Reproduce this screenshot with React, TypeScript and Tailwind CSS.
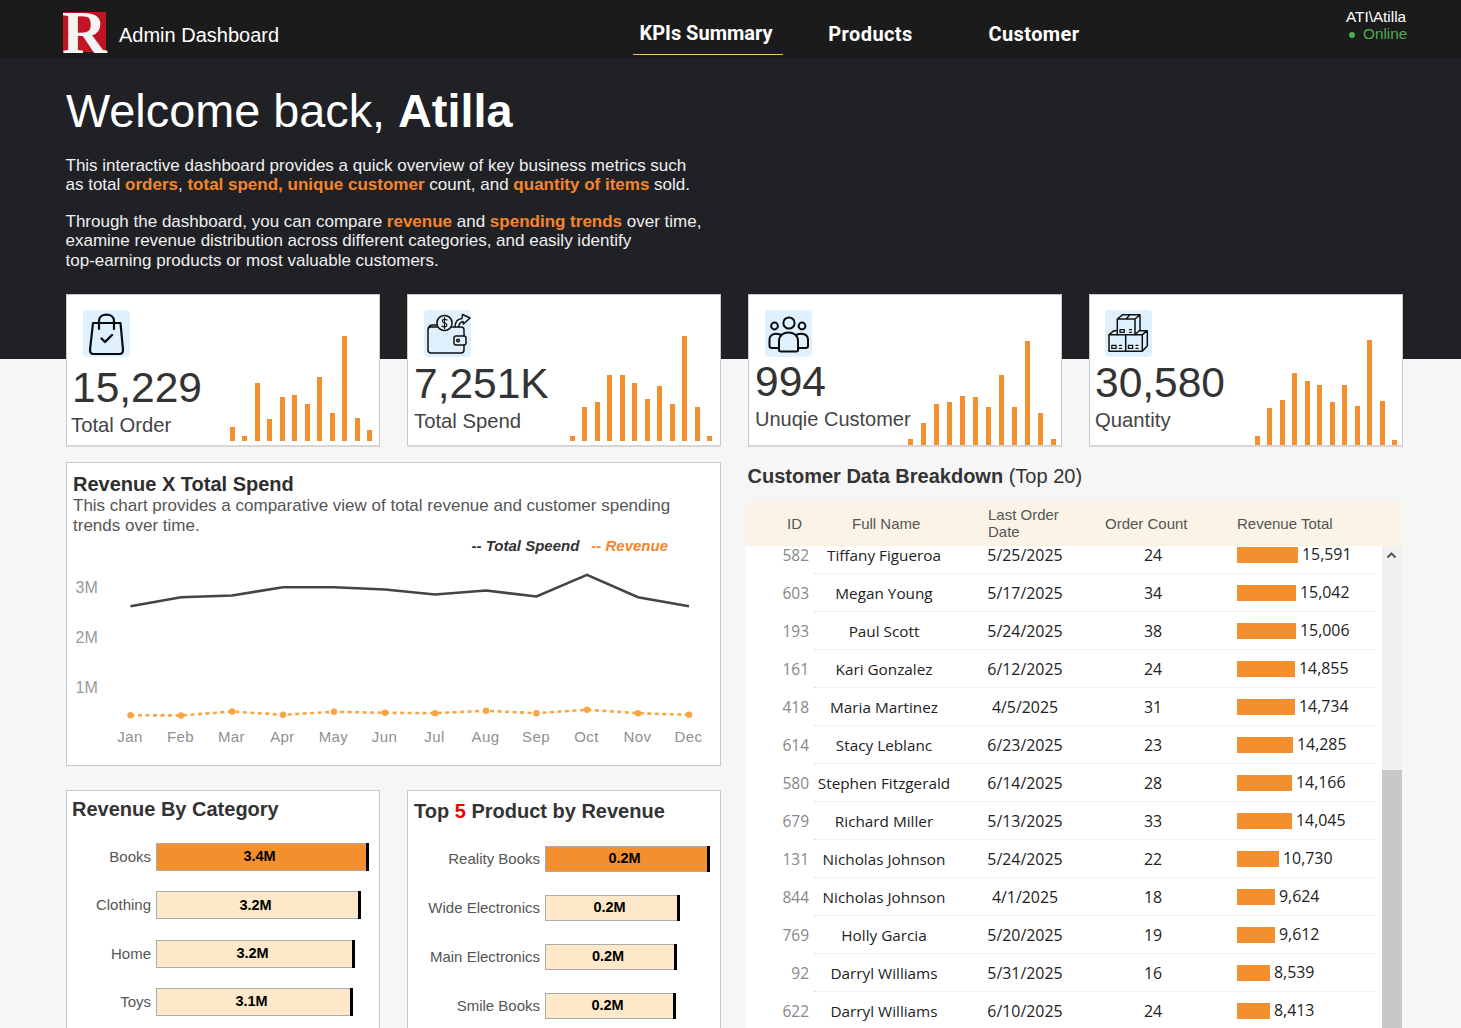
const Orange = ({ children }: { children: React.ReactNode }) => (
  <b className="font-bold text-[#f5852a]">{children}</b>
);

function BagIcon() {
  return (
    <svg viewBox="0 0 47 47" className="h-full w-full" fill="none" stroke="#0c0c0c" strokeWidth="2.2" strokeLinecap="round" strokeLinejoin="round">
      <path d="M10 13H37.5L40 40Q40 44 36.5 44H10.5Q7 44 7 40Z" />
      <path d="M16 19V11C16 2.5 31 2.5 31 11V19" />
      <path d="M18.5 28.5L22 32L29 25" strokeWidth="2.4" />
    </svg>
  );
}
function WalletIcon() {
  return (
    <svg viewBox="0 0 47 47" className="h-full w-full" fill="none" stroke="#111" strokeWidth="1.5" strokeLinecap="round" strokeLinejoin="round">
      <path d="M4 20V40Q4 43 7 43H37Q40 43 40 40V35M40 26V20Q40 17 37 17H7Q4 17 4 20Q4 15 9 15H13" />
      <circle cx="20.5" cy="13" r="7.6" fill="#dff0fe" />
      <path d="M23 10Q20.5 8.5 18.6 10Q18 12.6 20.5 13Q23.4 13.6 22.6 16Q20.5 17.6 18 16M20.5 7.5V18.5" strokeWidth="1.2" />
      <path d="M31 17C31 11 34 9 38 8.5L38.5 4.5L46 8L39.5 14L39 11.5C36 12 35 14 34.5 17" />
      <rect x="30" y="26" width="12" height="9" rx="2" />
      <circle cx="34" cy="30.5" r="1.3" />
    </svg>
  );
}
function PeopleIcon() {
  return (
    <svg viewBox="0 0 47 47" className="h-full w-full" fill="none" stroke="#0c0c0c" strokeWidth="2" strokeLinecap="round" strokeLinejoin="round">
      <circle cx="24" cy="13" r="5.6" />
      <circle cx="9.5" cy="16" r="3.4" />
      <circle cx="37" cy="16" r="3.4" />
      <path d="M14 40V31C14 19.5 33 19.5 33 31V40Q33 41.5 31 41.5H16Q14 41.5 14 40Z" />
      <path d="M14 38H7Q4.5 38 4.5 36V30C4.5 24 10 22.5 16 25" />
      <path d="M33 38H40.5Q43 38 43 36V30C43 24 37 22.5 31 25" />
    </svg>
  );
}
function BoxesIcon() {
  return (
    <svg viewBox="0 0 47 47" className="h-full w-full" fill="none" stroke="#111" strokeWidth="1.5" strokeLinecap="round" strokeLinejoin="round">
      <path d="M12.3 24.7V9H30V24.7M12.3 9L17.7 4.7H35L30 9M35 4.7V20L30 24.7M21 9L25 4.7" />
      <rect x="15" y="19.7" width="4.3" height="2.6" strokeWidth="1.3" />
      <path d="M24.5 19.7H26.5M24.5 22.3H26.5" strokeWidth="1.2" />
      <path d="M4 24.7H37.3V41.3H4ZM20.7 24.7V41.3M4 24.7L9 20.7H12.3M37.3 24.7L42.3 20.7H35M42.3 20.7V35.7L37.3 41.3" />
      <rect x="6.8" y="35.4" width="4.3" height="3" strokeWidth="1.3" />
      <path d="M14.5 35.4H16.5M14.5 38.4H16.5" strokeWidth="1.2" />
      <rect x="23.4" y="35.4" width="4.3" height="3" strokeWidth="1.3" />
      <path d="M31 35.4H33M31 38.4H33" strokeWidth="1.2" />
    </svg>
  );
}

const cards = [
  {
    value: "15,229", label: "Total Order", icon: <BagIcon />, iconCls: "ml-[16px]",
    numCls: "mt-[9px] ml-[5px]", labelCls: "mt-[3px] ml-[4px] text-[20.3px]",
    bars: [14, 5, 58, 22, 44, 46, 37, 64, 28, 105, 23, 11], barCls: "w-[142px] mr-[7px] mb-[4px]",
  },
  {
    value: "7,251K", label: "Total Spend", icon: <WalletIcon />, iconCls: "ml-[16px]",
    numCls: "mt-[5px] ml-[6px]", labelCls: "mt-[3px] ml-[6px] text-[20.3px]",
    bars: [5, 34, 39, 66, 66, 58, 42, 55, 37, 105, 34, 5], barCls: "w-[142px] mr-[8px] mb-[4px]",
  },
  {
    value: "994", label: "Unuqie Customer", icon: <PeopleIcon />, iconCls: "ml-[16px]",
    numCls: "mt-[3px] ml-[6px]", labelCls: "mt-[3px] ml-[6px] text-[20px]",
    bars: [6, 22, 41, 43, 49, 48, 38, 70, 38, 104, 32, 6], barCls: "w-[148px] mr-[5px] mb-0",
  },
  {
    value: "30,580", label: "Quantity", icon: <BoxesIcon />, iconCls: "ml-[15px]",
    numCls: "mt-[4px] ml-[5px]", labelCls: "mt-[3px] ml-[5px] text-[20.3px]",
    bars: [9, 37, 45, 72, 64, 60, 43, 60, 39, 105, 44, 5], barCls: "w-[142px] mr-[5px] mb-0",
  },
];

function KpiCard({ c }: { c: (typeof cards)[number] }) {
  return (
    <div className="flex h-[153px] justify-between overflow-hidden border border-[#c9c9c9] border-b-2 border-b-[#d6d6d6] bg-white">
      <div className="flex min-w-0 flex-col whitespace-nowrap pt-[15px]">
        <div className={`h-[47px] w-[47px] rounded bg-[#dff0fe] ${c.iconCls}`}>{c.icon}</div>
        <div className={`h-[44px] text-[42.5px] leading-[44px] text-[#333] ${c.numCls}`}>{c.value}</div>
        <div className={`h-[24px] leading-[24px] text-[#444] ${c.labelCls}`}>{c.label}</div>
      </div>
      <div className={`flex shrink-0 items-end justify-between self-end ${c.barCls}`}>
        {c.bars.map((h, i) => (
          <div key={i} className="w-[5px] bg-[#f48f2e]" style={{ height: h }} />
        ))}
      </div>
    </div>
  );
}

const xs = [130.5, 181, 232, 283, 334, 385, 435, 486, 536.5, 587, 638, 689];
const spend = [605.7, 596.7, 595, 586.7, 586.7, 589, 594, 590, 596, 574.3, 596.7, 605.7];
const revenue = [714.7, 715, 711, 714.3, 711.3, 712.3, 712.7, 710.3, 712.7, 709.3, 712.7, 714.3];
const months = ["Jan", "Feb", "Mar", "Apr", "May", "Jun", "Jul", "Aug", "Sep", "Oct", "Nov", "Dec"];

function LineChart() {
  const ox = 67;
  const oy = 556.5;
  const pts = (a: number[]) => a.map((y, i) => `${xs[i] - ox},${y - oy}`).join(" ");
  return (
    <svg width="653" height="209" className="block">
      <polyline points={pts(spend)} fill="none" stroke="#444" strokeWidth="2.6" />
      <polyline points={pts(revenue)} fill="none" stroke="#fba542" strokeWidth="2.6" strokeDasharray="4 3.5" />
      {revenue.map((y, i) => (
        <circle key={i} cx={xs[i] - ox} cy={y - oy} r="3.2" fill="#fba542" />
      ))}
      {[["3M", 587], ["2M", 637], ["1M", 687]].map(([t, y]) => (
        <text key={t as string} x="8.5" y={(y as number) - oy + 5} fontSize="16" fill="#999">{t}</text>
      ))}
      {months.map((m, i) => (
        <text key={m} x={xs[i] - ox - 0.5} y={737 - oy + 4.5} fontSize="15" letterSpacing="0.4" textAnchor="middle" fill="#8f8f8f">{m}</text>
      ))}
    </svg>
  );
}

function HBar({ label, value, width, active, h, labelW }: { label: string; value: string; width: string; active?: boolean; h: string; labelW: string }) {
  return (
    <div className="flex items-center">
      <div className={`pr-[5px] text-right text-[15px] whitespace-nowrap text-[#555] ${labelW}`}>{label}</div>
      <div className={`flex items-center justify-center border border-[#ababab] border-r-0 pr-[4px] text-[14.5px] font-bold text-black ${h} ${width} ${active ? "bg-[#f48f2e]" : "bg-[#fde8c9]"}`}>
        {value}
      </div>
      <div className={`w-[3px] bg-black ${h}`} />
    </div>
  );
}

const rows: [string, string, string, number, number][] = [
  ["582", "Tiffany Figueroa", "5/25/2025", 24, 15591],
  ["603", "Megan Young", "5/17/2025", 34, 15042],
  ["193", "Paul Scott", "5/24/2025", 38, 15006],
  ["161", "Kari Gonzalez", "6/12/2025", 24, 14855],
  ["418", "Maria Martinez", "4/5/2025", 31, 14734],
  ["614", "Stacy Leblanc", "6/23/2025", 23, 14285],
  ["580", "Stephen Fitzgerald", "6/14/2025", 28, 14166],
  ["679", "Richard Miller", "5/13/2025", 33, 14045],
  ["131", "Nicholas Johnson", "5/24/2025", 22, 10730],
  ["844", "Nicholas Johnson", "4/1/2025", 18, 9624],
  ["769", "Holly Garcia", "5/20/2025", 19, 9612],
  ["92", "Darryl Williams", "5/31/2025", 16, 8539],
  ["622", "Darryl Williams", "6/10/2025", 24, 8413],
];

export default function App() {
  return (
    <div className="h-[1028px] overflow-hidden bg-[#f6f6f6] font-['Liberation_Sans',Arial,sans-serif]">
      <header className="flex h-[58px] items-center bg-[#1b1b1b] text-white">
        <svg width="50" height="58" viewBox="0 0 50 58" className="ml-[62px] shrink-0">
          <rect x="1" y="12" width="43" height="40" fill="#c01522" />
          <text x="0" y="52.5" fontSize="62" fontWeight="700" fontFamily="'Liberation Serif', serif" fill="#f4f4f4">R</text>
        </svg>
        <div className="ml-[7px] mt-[12px] w-[514px] text-[20px]">Admin Dashboard</div>
        <nav className="flex h-full items-stretch font-['Roboto',sans-serif] text-[20px] font-bold">
          <div className="mb-[3px] mt-[2px] flex w-[150px] items-center justify-center border-b border-[#f5c46a] pr-[4px] pt-[10px]">KPIs Summary</div>
          <div className="mb-[3px] ml-[45px] mt-[2px] flex w-[85px] items-center justify-center pt-[10px] tracking-[0.4px]">Products</div>
          <div className="mb-[3px] ml-[75px] mt-[2px] flex w-[92px] items-center justify-center pt-[10px] tracking-[0.4px]">Customer</div>
        </nav>
        <div className="-mt-[9px] ml-[266px] text-[15.3px] leading-[17px]">
          <div>ATI\Atilla</div>
          <div className="pl-[1px] text-[#4caf50]"><span className="ml-[2px] mr-[8px] inline-block h-[6px] w-[6px] -translate-y-[1px] rounded-full bg-[#4caf50]" />Online</div>
        </div>
      </header>

      <section className="h-[301px] bg-[#202125] pl-[66px] pt-[25px] text-[#efefef]">
        <h1 className="text-[46.8px] leading-[56px] font-normal text-white">
          Welcome back, <b className="font-bold">Atilla</b>
        </h1>
        <p className="-ml-[0.5px] mt-[17px] text-[17px] leading-[19.3px]">
          This interactive dashboard provides a quick overview of key business metrics such<br />
          as total <Orange>orders</Orange>, <Orange>total spend, unique customer</Orange> count, and <Orange>quantity of items</Orange> sold.
        </p>
        <p className="-ml-[0.5px] mt-[17px] text-[17px] leading-[19.5px]">
          Through the dashboard, you can compare <Orange>revenue</Orange> and <Orange>spending trends</Orange> over time,<br />
          examine revenue distribution across different categories, and easily identify<br />
          top-earning products or most valuable customers.
        </p>
      </section>

      <main className="-mt-[65px] w-[1403px] pl-[66px]">
        <div className="grid grid-cols-4 gap-[27px]">
          {cards.map((c) => (
            <KpiCard key={c.label} c={c} />
          ))}
        </div>

        <div className="mt-[15px] grid grid-cols-2 gap-[27px]">
          <div>
            <div className="h-[304px] border border-[#c9c9c9] bg-white">
              <h2 className="ml-[6px] mt-[9px] text-[20px] leading-[24px] font-bold text-[#2e2e2e]">Revenue X Total Spend</h2>
              <p className="ml-[6px] text-[17px] leading-[20px] text-[#555]">
                This chart provides a comparative view of total revenue and customer spending<br />trends over time.
              </p>
              <div className="-mt-[1px] mr-[52px] flex h-[22px] items-center justify-end gap-[12px] text-[15px] font-bold italic">
                <span className="text-[#333]">-- Total Speend</span>
                <span className="text-[#f5852a]">-- Revenue</span>
              </div>
              <LineChart />
            </div>

            <div className="mt-[24px] grid h-[260px] grid-cols-2 gap-[27px]">
              <div className="border border-[#c9c9c9] bg-white">
                <h2 className="ml-[5px] mt-[6px] text-[20px] leading-[24px] font-bold text-[#333]">Revenue By Category</h2>
                <div className="mt-[22px] flex flex-col gap-[20.4px]">
                  <HBar label="Books" value="3.4M" width="w-[210px]" active h="h-[28px]" labelW="w-[89px]" />
                  <HBar label="Clothing" value="3.2M" width="w-[202px]" h="h-[28px]" labelW="w-[89px]" />
                  <HBar label="Home" value="3.2M" width="w-[196px]" h="h-[28px]" labelW="w-[89px]" />
                  <HBar label="Toys" value="3.1M" width="w-[194px]" h="h-[28px]" labelW="w-[89px]" />
                </div>
              </div>
              <div className="border border-[#c9c9c9] bg-white">
                <h2 className="ml-[6px] mt-[8px] text-[20px] leading-[24px] font-bold text-[#333]">
                  Top <span className="text-[#f00000]">5</span> Product by Revenue
                </h2>
                <div className="mt-[23px] flex flex-col gap-[23px]">
                  <HBar label="Reality Books" value="0.2M" width="w-[162px]" active h="h-[26px]" labelW="w-[137px]" />
                  <HBar label="Wide Electronics" value="0.2M" width="w-[132px]" h="h-[26px]" labelW="w-[137px]" />
                  <HBar label="Main Electronics" value="0.2M" width="w-[129px]" h="h-[26px]" labelW="w-[137px]" />
                  <HBar label="Smile Books" value="0.2M" width="w-[128px]" h="h-[26px]" labelW="w-[137px]" />
                </div>
              </div>
            </div>
          </div>

          <div>
            <h2 className="-ml-[0.5px] mt-[2px] text-[20px] leading-[24px] font-bold text-[#333]">
              Customer Data Breakdown <span className="font-normal">(Top 20)</span>
            </h2>
            <div className="-ml-[2px] mt-[13px] w-[656px]">
              <div className="flex h-[45px] items-center bg-[#faf3e6] pt-[2px] text-[15px] text-[#555]">
                <div className="ml-[41px] w-[65px]">ID</div>
                <div className="w-[136px]">Full Name</div>
                <div className="-mt-[4px] w-[117px] leading-[17px]">Last Order<br />Date</div>
                <div className="w-[132px]">Order Count</div>
                <div>Revenue Total</div>
              </div>
              <div className="flex h-[482px]">
                <div className="w-[636px] bg-white font-['Open_Sans',sans-serif] text-[15.9px] leading-[18px] text-[#222]">
                  {rows.map(([id, name, date, count, rev], i) => (
                    <div key={id} className={i === 0 ? "h-[28px]" : "h-[38px]"}>
                      <div className={`flex whitespace-nowrap ${i === 0 ? "h-[27px] items-start" : "h-[37px] items-center"}`}>
                        <div className="w-[63px] text-right text-[15.5px] text-[#888]">{id}</div>
                        <div className="w-[150px] text-center text-[15.3px]">{name}</div>
                        <div className="w-[132px] text-center">{date}</div>
                        <div className="w-[124px] text-center">{count}</div>
                        <div className="ml-[22px] flex items-center gap-[4px]">
                          <div className="h-[16px] bg-[#f48f2e]" style={{ width: Math.round(rev / 255.6) }} />
                          <span className="-mt-[1px]">{rev.toLocaleString("en-US")}</span>
                        </div>
                      </div>
                      <div className="ml-[68px] mr-[6px] border-b border-dotted border-[#e2e2e2]" />
                    </div>
                  ))}
                </div>
                <div className="flex w-[20px] flex-col bg-[#f0f0f0]">
                  <svg width="19" height="18" viewBox="0 0 19 18" className="mt-[1px]" fill="none" stroke="#555" strokeWidth="2">
                    <path d="M5.5 10.5L9.5 6.5L13.5 10.5" />
                  </svg>
                  <div className="mt-[205px] flex-1 bg-[#c8c8c8]" />
                </div>
              </div>
            </div>
          </div>
        </div>
      </main>
    </div>
  );
}
